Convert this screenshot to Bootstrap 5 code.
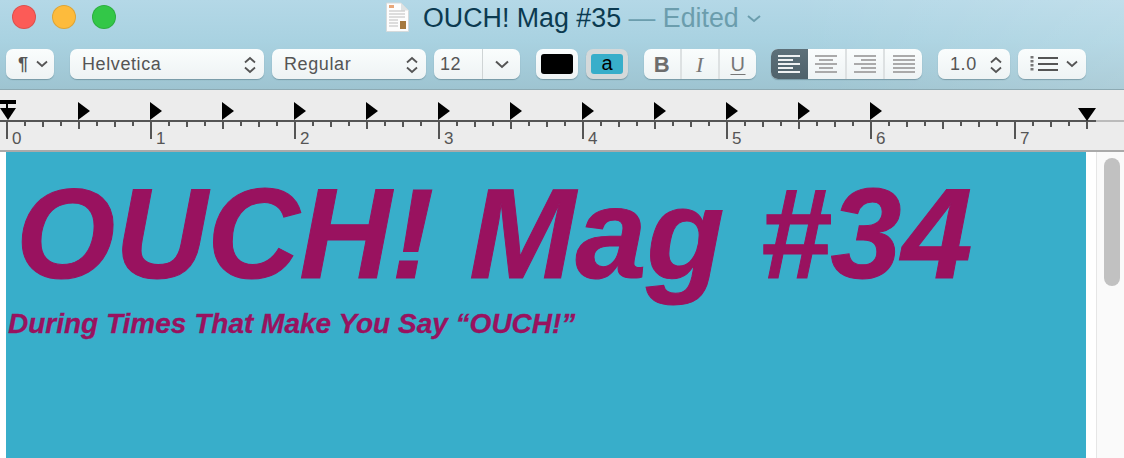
<!DOCTYPE html>
<html>
<head>
  <link href="https://cdn.jsdelivr.net/npm/bootstrap@5.3.0/dist/css/bootstrap.min.css" rel="stylesheet">
  <style>
    html, body { height: 458px; overflow: hidden; background: #fff; }
    body { font-family: "Liberation Sans", Arial, sans-serif; }

    /* window chrome */
    .chrome {
      height: 90px;
      background: linear-gradient(90deg, rgba(255,255,255,0) 70%, rgba(255,255,255,.16) 100%), linear-gradient(180deg, #b4d8e7 0%, #a9d2e1 45%, #9ec4d1 100%);
      border-bottom: 1px solid #8daab3;
    }
    .titlerow { height: 49px; }
    .lights { width: 386px; padding-left: 12px; gap: 16px; padding-bottom: 16px; }
    .light { width: 24px; height: 24px; border-radius: 50%; border: 1px solid rgba(0,0,0,.12); }
    .doc-icon { margin-top: -16px; margin-right: 14px; }
    .doc-title { font-size: 26.8px; color: #0b3a50; line-height: 32px; margin-top: -14px; white-space: nowrap; }
    .doc-edited { color: #6b9dad; }

    .toolrow { height: 30px; padding-left: 6px; }
    .tb {
      height: 30px;
      background: linear-gradient(180deg, #fafdfd, #eef3f4);
      border-radius: 7px;
      box-shadow: 0 1px 1px rgba(40,70,80,.35);
      color: #555;
      font-size: 18px;
      letter-spacing: .6px;
      padding: 1px 8px 0 12px;
      flex-shrink: 0;
    }
    .w-para { width: 48px; margin-right: 16px; padding: 0 6px 0 12px; font-weight: 700; }
    .w-font { width: 194px; margin-right: 8px; }
    .w-style { width: 154px; margin-right: 8px; }
    .w-size { width: 86px; margin-right: 16px; padding: 0; overflow: hidden; }
    .w-swatch { width: 42px; margin-right: 8px; padding: 0; }
    .w-bg { width: 42px; margin-right: 16px; padding: 0; background: #d4d9da; }
    .w-biu { width: 112px; margin-right: 15px; padding: 0; overflow: hidden; }
    .w-align { width: 151px; margin-right: 16px; padding: 0; overflow: hidden; }
    .w-space { width: 72px; margin-right: 8px; }
    .w-list { width: 68px; padding: 0 8px 0 12px; }
    .size-num { width: 49px; padding: 1px 0 0 6px; height: 100%; border-right: 1px solid #cfd4d5; }
    .size-arrow { flex: 1; height: 100%; }
    .swatch-black { width: 32px; height: 20px; background: #000; border-radius: 3px; }
    .swatch-blue { width: 32px; height: 20px; background: #38aeca; border-radius: 3px; color: #000; font-size: 20px; line-height: 18px; text-align: center; letter-spacing: 0; }
    .seg { height: 100%; flex: 1; border-right: 2px solid #dde1e2; }
    .seg:last-child { border-right: 0; }
    .seg-on { background: linear-gradient(180deg, #5d7079, #4f626b); border-right: 0; }
    .seg-b { font-weight: 700; font-size: 22px; color: #6d6d6d; }
    .seg-i { font-family: "Liberation Serif", serif; font-style: italic; font-size: 22px; color: #777; }
    .seg-u { font-size: 20px; color: #777; text-decoration: underline; text-underline-offset: 3px; text-decoration-thickness: 1px; }

    /* ruler */
    .ruler { height: 62px; background: #ececec; border-bottom: 2px solid #aaa; }
    .ruler svg { display: block; }
    .ruler text { font-family: "Liberation Sans", Arial, sans-serif; font-size: 17px; fill: #555; }

    /* document */
    .doc-area { height: 306px; }
    .page-gutter { width: 6px; }
    .page {
      width: 1080px;
      background: #38aeca;
      color: #99125f;
      font-weight: 700;
      font-style: italic;
      overflow: hidden;
      padding-top: 9px;
    }
    .big-head { font-size: 127.5px; line-height: 146px; margin: 0 0 0 10px; white-space: nowrap; font-weight: 700; -webkit-text-stroke: 1px #99125f; }
    .sub-head { font-size: 28px; line-height: 32px; margin: 1px 0 0 2px; white-space: nowrap; font-weight: 700; -webkit-text-stroke: .3px #99125f; }
    .page-right { width: 10px; }
    .scroll-track { width: 28px; background: #fafafa; border-left: 1px solid #e6e6e6; padding: 6px 0 0 7px; }
    .scroll-thumb { width: 16px; height: 128px; background: #c1c1c1; border-radius: 8px; }
  </style>
</head>
<body>

<div class="chrome">
  <div class="titlerow d-flex align-items-center">
    <div class="lights d-flex align-items-center">
      <div class="light" style="background:#fc5b57"></div>
      <div class="light" style="background:#fdbb3c"></div>
      <div class="light" style="background:#33c748"></div>
    </div>
    <svg class="doc-icon" width="23" height="30" viewBox="0 0 23 30">
      <path d="M0.5 1H15L22.5 8.5V29.5H0.5Z" fill="#fdfdfd" stroke="#d5dadb"/>
      <path d="M15 1V8.5H22.5Z" fill="#dfe3e4"/>
      <rect x="3" y="3" width="5" height="3" fill="#e8a77a"/>
      <path d="M3 9H19M3 12H19M3 15H19M3 18H12M3 21H12M3 24H12" stroke="#bdbdbd" stroke-width="1"/>
      <rect x="14" y="19" width="6" height="8" fill="#a5793f"/>
    </svg>
    <div class="doc-title">OUCH! Mag #35 <span class="doc-edited">— Edited</span>
      <svg width="16" height="10" viewBox="0 0 16 10"><path d="M2 2L8 7L14 2" fill="none" stroke="#6b9dad" stroke-width="2"/></svg>
    </div>
  </div>

  <div class="toolrow d-flex">
    <div class="tb w-para d-flex align-items-center justify-content-between">¶
      <svg width="12" height="8" viewBox="0 0 12 8"><path d="M1 1.5L6 6L11 1.5" fill="none" stroke="#555" stroke-width="1.8"/></svg>
    </div>
    <div class="tb w-font d-flex align-items-center justify-content-between">Helvetica
      <svg width="12" height="18" viewBox="0 0 12 18"><path d="M1 6.5L6 2L11 6.5M1 11.5L6 16L11 11.5" fill="none" stroke="#555" stroke-width="1.8"/></svg>
    </div>
    <div class="tb w-style d-flex align-items-center justify-content-between">Regular
      <svg width="12" height="18" viewBox="0 0 12 18"><path d="M1 6.5L6 2L11 6.5M1 11.5L6 16L11 11.5" fill="none" stroke="#555" stroke-width="1.8"/></svg>
    </div>
    <div class="tb w-size d-flex align-items-center">
      <div class="size-num d-flex align-items-center">12</div>
      <div class="size-arrow d-flex align-items-center justify-content-center">
        <svg width="14" height="9" viewBox="0 0 14 9"><path d="M1 1.5L7 7L13 1.5" fill="none" stroke="#555" stroke-width="2"/></svg>
      </div>
    </div>
    <div class="tb w-swatch d-flex align-items-center justify-content-center"><div class="swatch-black"></div></div>
    <div class="tb w-bg d-flex align-items-center justify-content-center"><div class="swatch-blue">a</div></div>
    <div class="tb w-biu d-flex">
      <div class="seg seg-b d-flex align-items-center justify-content-center">B</div>
      <div class="seg seg-i d-flex align-items-center justify-content-center">I</div>
      <div class="seg seg-u d-flex align-items-center justify-content-center">U</div>
    </div>
    <div class="tb w-align d-flex">
      <div class="seg seg-on d-flex align-items-center justify-content-center">
        <svg width="22" height="18" viewBox="0 0 22 18"><path d="M0 1H22M0 5H15M0 9H22M0 13H15M0 17H22" stroke="#eef1f2" stroke-width="2"/></svg>
      </div>
      <div class="seg d-flex align-items-center justify-content-center">
        <svg width="22" height="18" viewBox="0 0 22 18"><path d="M0 1H22M4 5H18M0 9H22M4 13H18M0 17H22" stroke="#aaa" stroke-width="2"/></svg>
      </div>
      <div class="seg d-flex align-items-center justify-content-center">
        <svg width="22" height="18" viewBox="0 0 22 18"><path d="M0 1H22M7 5H22M0 9H22M7 13H22M0 17H22" stroke="#aaa" stroke-width="2"/></svg>
      </div>
      <div class="seg d-flex align-items-center justify-content-center">
        <svg width="22" height="18" viewBox="0 0 22 18"><path d="M0 1H22M0 5H22M0 9H22M0 13H22M0 17H22" stroke="#aaa" stroke-width="2"/></svg>
      </div>
    </div>
    <div class="tb w-space d-flex align-items-center justify-content-between">1.0
      <svg width="12" height="18" viewBox="0 0 12 18"><path d="M1 6.5L6 2L11 6.5M1 11.5L6 16L11 11.5" fill="none" stroke="#555" stroke-width="1.8"/></svg>
    </div>
    <div class="tb w-list d-flex align-items-center justify-content-between">
      <svg width="28" height="18" viewBox="0 0 28 18"><path d="M8 3H28M8 9H28M8 15H28" stroke="#555" stroke-width="2"/><path d="M2 1V17" stroke="#777" stroke-width="3" stroke-dasharray="2.5 1.5"/></svg>
      <svg width="12" height="8" viewBox="0 0 12 8"><path d="M1 1.5L6 6L11 1.5" fill="none" stroke="#555" stroke-width="1.8"/></svg>
    </div>
  </div>
</div>

<div class="ruler">
  <svg id="rulerSvg" width="1124" height="60" viewBox="0 0 1124 60"></svg>
</div>

<div class="doc-area d-flex">
  <div class="page-gutter"></div>
  <div class="page">
    <h1 class="big-head">OUCH! Mag #34</h1>
    <h2 class="sub-head">During Times That Make You Say “OUCH!”</h2>
  </div>
  <div class="page-right"></div>
  <div class="scroll-track"><div class="scroll-thumb"></div></div>
</div>

<script>
// draw the ruler: y values here are relative to the ruler top (y=90 on the page)
const svg = document.getElementById('rulerSvg');
let out = '<rect x="0" y="30" width="1096" height="2" fill="#555"/><rect x="1096" y="30" width="28" height="2" fill="#bbb"/>';

for (let i = 0; i * 18 + 7 < 1096; i++) {
  const x = i * 18 + 7;
  let h = 5;
  if (i % 8 === 0) h = 18;
  else if (i % 4 === 0) h = 8;
  else if (i % 2 === 0) h = 6;
  out += `<rect x="${x - 1}" y="31" width="2" height="${h}" fill="#555"/>`;
  if (i % 8 === 0) out += `<text x="${x + 5}" y="54">${i / 8}</text>`;
}

// tab stops
for (let i = 0; i < 12; i++) {
  const x = 78 + i * 72;
  out += `<path d="M${x} 12L${x + 12} 21L${x} 30Z" fill="#000"/>`;
}

// left indent marker and right margin marker
out += '<rect x="0" y="10" width="16" height="4" fill="#000"/><rect x="6" y="14" width="2" height="5" fill="#000"/>';
out += '<path d="M0 18H16L8 30Z" fill="#000"/>';
out += '<path d="M1078 18H1096L1087 31Z" fill="#000"/><rect x="1086" y="31" width="2" height="7" fill="#555"/>';
svg.innerHTML = out;
</script>
<script src="https://cdn.jsdelivr.net/npm/bootstrap@5.3.0/dist/js/bootstrap.bundle.min.js"></script>
</body>
</html>
